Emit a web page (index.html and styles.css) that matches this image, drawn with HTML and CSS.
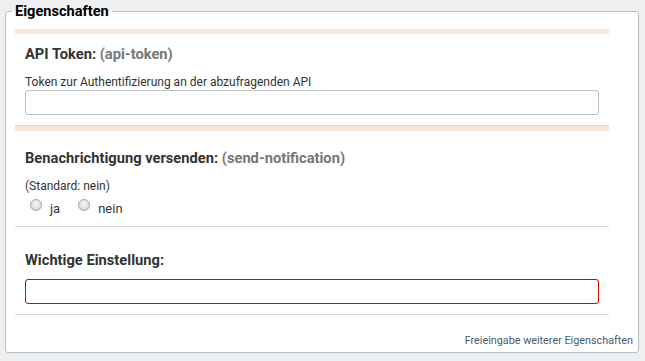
FILE: index.html
```html
<!DOCTYPE html>
<html lang="de">
<head>
<meta charset="utf-8">
<title>Eigenschaften</title>
<link rel="stylesheet" href="styles.css">
</head>
<body>
<fieldset class="props">
  <legend class="props-legend">Eigenschaften</legend>
  <div class="fields">
    <div class="field field-accent field-first">
      <div class="field-label">API Token: <span class="field-key">(api-token)</span></div>
      <div class="field-desc">Token zur Authentifizierung an der abzufragenden API</div>
      <input class="text-input" type="text">
    </div>
    <div class="field field-accent field-second">
      <div class="field-label">Benachrichtigung versenden: <span class="field-key">(send-notification)</span></div>
      <div class="field-desc">(Standard: nein)</div>
      <div class="radio-row">
        <label class="radio-opt"><input class="radio" type="radio" name="notify"><span>ja</span></label>
        <label class="radio-opt"><input class="radio" type="radio" name="notify"><span>nein</span></label>
      </div>
    </div>
    <div class="field field-third">
      <div class="field-label">Wichtige Einstellung:</div>
      <input class="text-input text-input-error" type="text">
    </div>
  </div>
  <div class="props-footer"><a class="footer-link" href="#">Freieingabe weiterer Eigenschaften</a></div>
</fieldset>
</body>
</html>
```
FILE: styles.css
```css
html, body {
  margin: 0;
  padding: 0;
}
body {
  background: #eeeff0;
  font-family: Roboto, "Liberation Sans", Arial, sans-serif;
  color: #333;
  padding-top: 3px;
}
.props {
  margin: 0 6px 0 5px;
  padding: 0;
  border: 1px solid #b8bfc7;
  border-radius: 3px;
  background: #fff;
  min-width: 0;
}
.props-legend {
  margin-left: 6px;
  padding: 0 3px;
  font-size: 14.6px;
  font-weight: 700;
  line-height: 16px;
  color: #000;
}
.fields {
  margin-top: 10px;
  padding: 0 29px 0 9px;
}
.field {
  padding: 10px 10px 10px;
  border-bottom: 1px solid #d5d7d9;
}
.field-accent {
  border-top: 5px solid #f9e6dd;
}
.field-second {
  padding-top: 17px;
}
.field-third {
  padding-top: 23px;
}
.field-label {
  font-size: 14.7px;
  font-weight: 700;
  line-height: 20px;
  color: #333;
}
.field-key {
  color: #777;
}
.field-desc {
  margin-top: 10px;
  font-size: 12px;
  line-height: 16px;
  color: #333;
}
.text-input {
  display: block;
  box-sizing: border-box;
  width: 100%;
  height: 25px;
  margin: 0;
  padding: 2px 6px;
  border: 1px solid #b6bec6;
  border-radius: 3px;
  background: #fff;
  font: 13px Roboto, "Liberation Sans", Arial, sans-serif;
  outline: none;
}
.field-third .text-input {
  margin-top: 9px;
}
.text-input-error {
  border-color: #e00000;
}
.radio-row {
  display: flex;
  align-items: center;
  height: 22px;
  padding-left: 5px;
}
.radio-opt {
  display: flex;
  align-items: center;
  font-size: 13px;
  line-height: 16px;
  color: #333;
  margin-right: 18px;
}
.radio-opt span {
  position: relative;
  top: 4px;
}
.radio {
  -webkit-appearance: none;
  appearance: none;
  box-sizing: border-box;
  width: 12px;
  height: 12px;
  margin: 0 8px 0 0;
  border: 1px solid #a8a8a8;
  border-radius: 50%;
  background: radial-gradient(circle at 50% 35%, #f4f4f4 0%, #dedede 60%, #cfcfcf 100%);
}
.props-footer {
  margin-top: 18px;
  padding: 0 5px 4px 0;
  text-align: right;
  font-size: 10.8px;
  line-height: 15px;
}
.footer-link {
  color: #4b5a6e;
  text-decoration: none;
}
```
